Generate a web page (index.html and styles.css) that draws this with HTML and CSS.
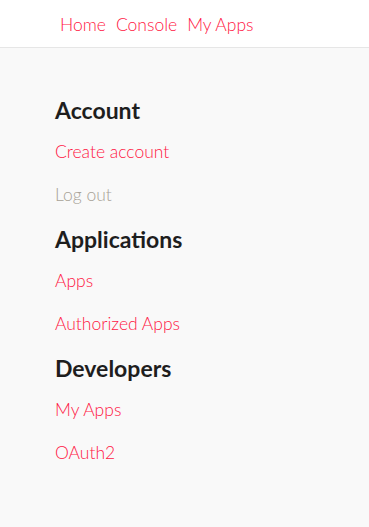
FILE: index.html
```html
<!DOCTYPE html>
<html>
<head>
  <link rel="stylesheet" href="styles.css">
</head>
<body>
  <header class="topbar">
    <nav class="topnav">
      <a href="#">Home</a>
      <a href="#">Console</a>
      <a href="#">My Apps</a>
    </nav>
  </header>

  <main class="menu">
    <section class="menu-group">
      <h2>Account</h2>
      <a href="#">Create account</a>
      <a href="#" class="muted">Log out</a>
    </section>
    <section class="menu-group">
      <h2>Applications</h2>
      <a href="#">Apps</a>
      <a href="#">Authorized Apps</a>
    </section>
    <section class="menu-group">
      <h2>Developers</h2>
      <a href="#">My Apps</a>
      <a href="#">OAuth2</a>
    </section>
  </main>
</body>
</html>
```

FILE: styles.css
```css
body {
  margin: 0;
  min-height: 100vh;
  background: #f9f9f9;
  font-family: Lato, 'Noto Sans', sans-serif;
}

a {
  color: #ff1744;
  text-decoration: none;
}

.topbar {
  background: #fff;
  height: 47px;
  border-bottom: 1px solid #e6e6e6;
}

.topnav {
  display: flex;
  gap: 10px;
  padding: 14px 0 0 60px;
  font-size: 17.5px;
  font-weight: 300;
}

.menu {
  display: flex;
  flex-direction: column;
  gap: 8px;
  padding: 47px 55px;
}

.menu-group {
  display: flex;
  flex-direction: column;
  align-items: flex-start;
}

.menu-group h2 {
  margin: 0 0 5px;
  font-size: 23px;
  font-weight: 700;
  color: #1e1e1e;
  line-height: 30px;
}

.menu-group a {
  font-size: 17.5px;
  font-weight: 300;
  line-height: 43px;
}

.menu-group a.muted {
  color: #a8a297;
}
```
